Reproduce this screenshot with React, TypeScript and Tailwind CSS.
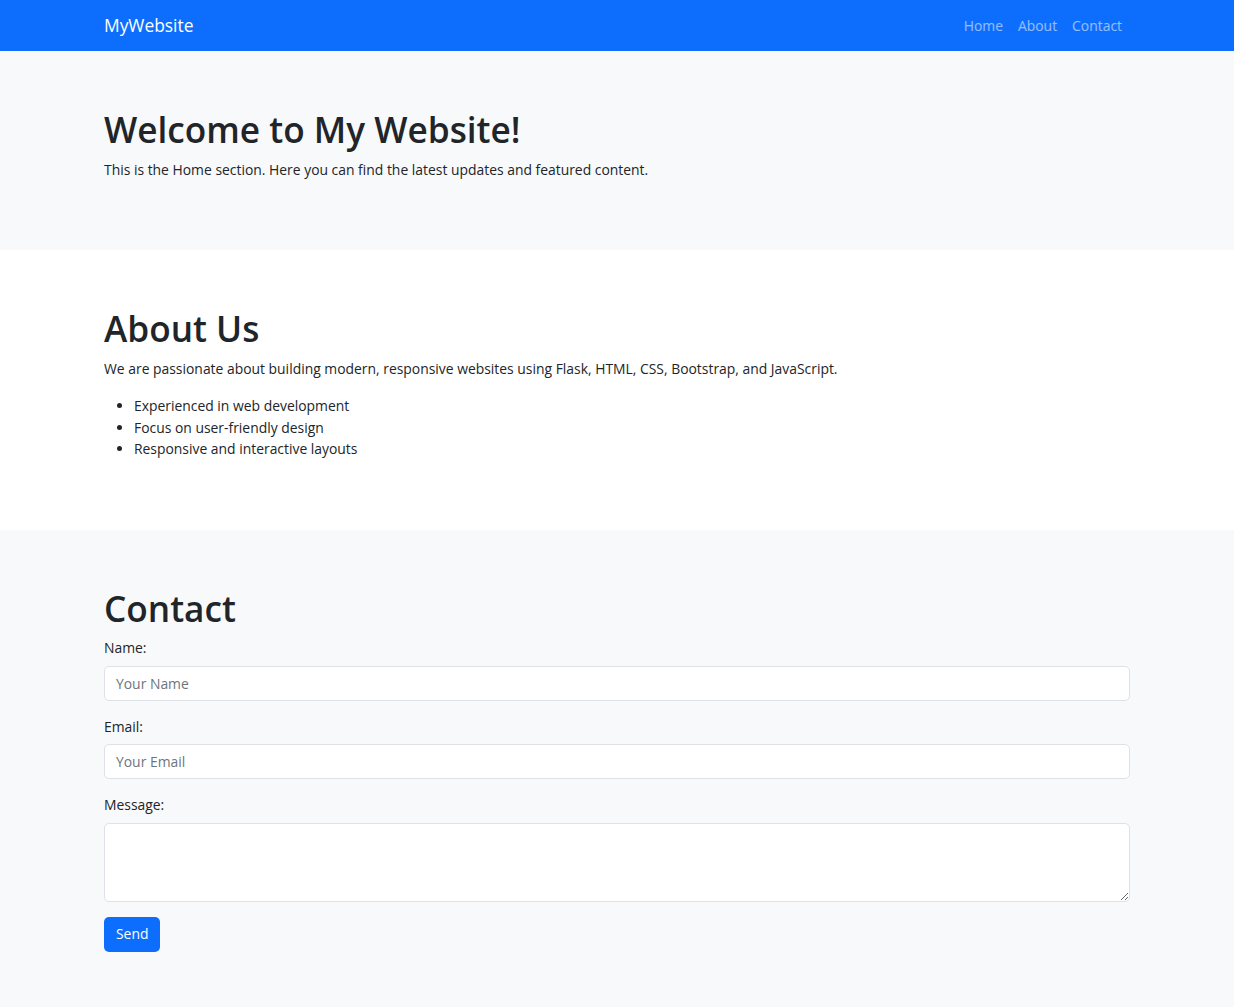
export default function App() {
  const font = { fontFamily: '"Open Sans", "Noto Sans", sans-serif' };
  const field =
    "block w-full rounded-[5px] border border-[#dee2e6] bg-white px-[11px] text-[13.9px] outline-none placeholder:text-[#6c757d]";
  return (
    <div className="min-h-[1007px] bg-[#f8f9fa] text-[13.9px] leading-[21.6px] text-[#212529]" style={font}>
      {/* Navbar */}
      <nav className="h-[51px] bg-[#0d6efd]">
        <div className="mx-auto flex h-full w-[1026px] items-center justify-between pt-[1px]">
          <a href="#" className="text-[17.4px] text-white">MyWebsite</a>
          <div className="flex items-center gap-[15px] pr-[8px] text-[13.9px] text-white/55">
            <a href="#">Home</a>
            <a href="#">About</a>
            <a href="#">Contact</a>
          </div>
        </div>
      </nav>

      {/* Home */}
      <section className="bg-[#f8f9fa] pt-[57px] pb-[55px]">
        <div className="mx-auto w-[1026px]">
          <h1 className="mb-[7px] text-[35.2px] leading-[43px] font-semibold">Welcome to My Website!</h1>
          <p className="mb-[14px] pt-[1px]">This is the Home section. Here you can find the latest updates and featured content.</p>
        </div>
      </section>

      {/* About */}
      <section className="bg-white pt-[57px] pb-[57px]">
        <div className="mx-auto w-[1026px]">
          <h1 className="mb-[7px] text-[35.2px] leading-[43px] font-semibold">About Us</h1>
          <p className="mb-[16px] pt-[1px]">We are passionate about building modern, responsive websites using Flask, HTML, CSS, Bootstrap, and JavaScript.</p>
          <ul className="mb-[13px] list-disc pl-[30px]">
            <li>Experienced in web development</li>
            <li>Focus on user-friendly design</li>
            <li>Responsive and interactive layouts</li>
          </ul>
        </div>
      </section>

      {/* Contact */}
      <section className="bg-[#f8f9fa] pt-[57px] pb-[55px]">
        <div className="mx-auto w-[1026px]">
          <h1 className="mb-[7px] text-[35.2px] leading-[43px] font-semibold">Contact</h1>
          <form onSubmit={(e) => e.preventDefault()}>
            <div className="mb-[15px]">
              <label className="mb-[7px] block">Name:</label>
              <input type="text" placeholder="Your Name" className={`${field} h-[35px]`} />
            </div>
            <div className="mb-[15px]">
              <label className="mb-[7px] block">Email:</label>
              <input type="email" placeholder="Your Email" className={`${field} h-[35px]`} />
            </div>
            <div className="mb-[15px]">
              <label className="mb-[7px] block">Message:</label>
              <textarea rows={3} className={`${field} h-[79px] resize-y py-[5px]`} />
            </div>
            <button
              type="submit"
              className="h-[35px] rounded-[5px] bg-[#0d6efd] px-[12px] text-[13.9px] text-white"
            >
              Send
            </button>
          </form>
        </div>
      </section>
    </div>
  );
}
